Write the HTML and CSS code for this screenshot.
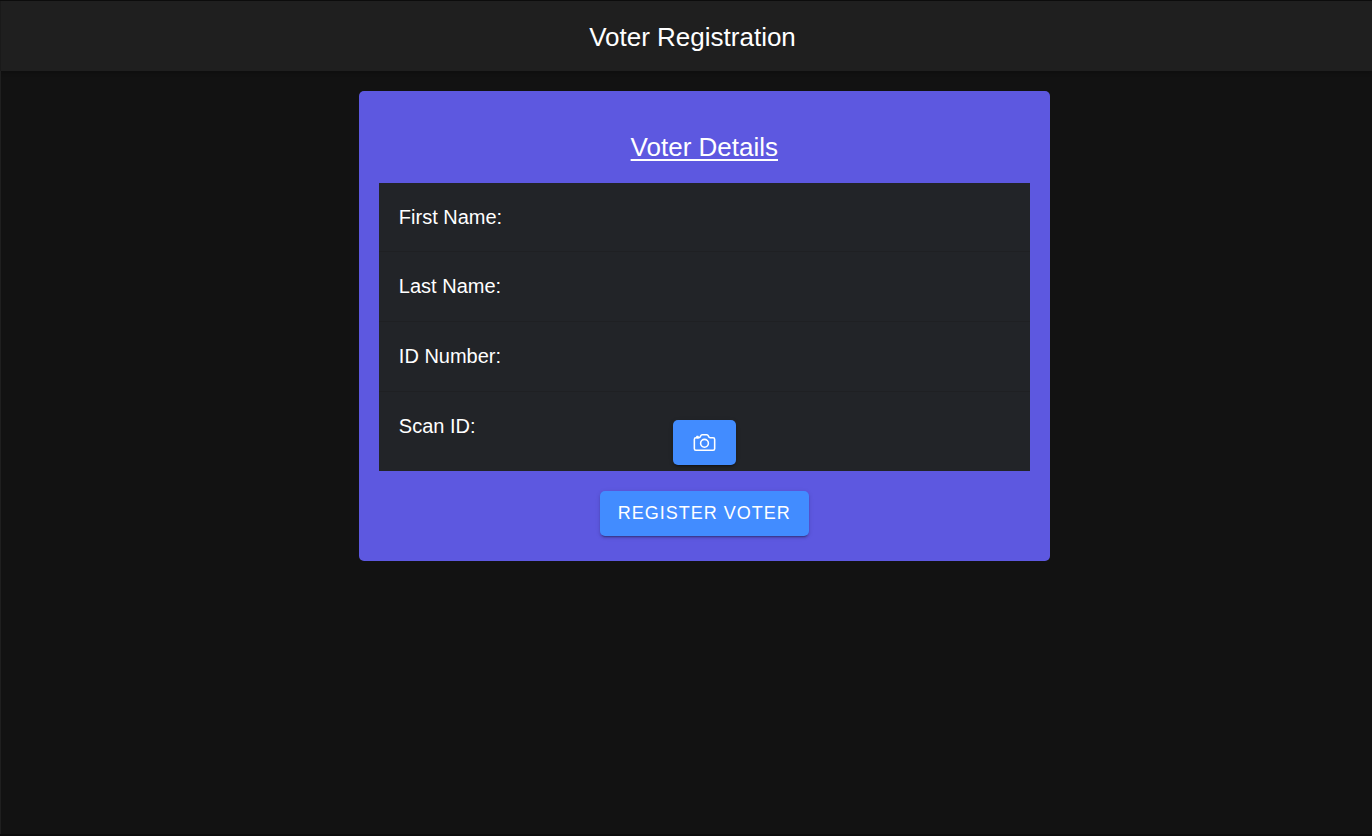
FILE: index.html
```html
<!DOCTYPE html>
<html lang="en">
<head>
<meta charset="utf-8">
<title>Voter Registration</title>
<link rel="stylesheet" href="styles.css">
</head>
<body>
<header class="toolbar"><h1 class="toolbar-title">Voter Registration</h1></header>
<main class="content">
  <form class="card">
    <h2 class="card-title">Voter Details</h2>
    <div class="list">
      <div class="item"><label for="first">First Name:</label><input id="first" type="text"></div>
      <div class="item"><label for="last">Last Name:</label><input id="last" type="text"></div>
      <div class="item"><label for="idnum">ID Number:</label><input id="idnum" type="text"></div>
      <div class="item item-scan">
        <label for="scan">Scan ID:</label>
        <button class="button scan-button" id="scan" type="button">
          <svg class="icon" viewBox="0 0 512 512" aria-hidden="true" fill="none" stroke="currentColor" stroke-width="32" stroke-linecap="round" stroke-linejoin="round">
            <path d="M350.54 148.68l-26.62-42.06C318.31 100.08 310.62 96 302 96h-92c-8.62 0-16.31 4.08-21.92 10.62l-26.62 42.06C155.85 155.23 148.62 160 140 160H80a32 32 0 00-32 32v192a32 32 0 0032 32h352a32 32 0 0032-32V192a32 32 0 00-32-32h-59c-8.65 0-16.85-4.77-22.46-11.32z"/>
            <circle cx="256" cy="272" r="80"/>
            <path d="M124 158v-22h-24v22"/>
          </svg>
        </button>
      </div>
    </div>
    <button class="button register-button" type="button">Register Voter</button>
  </form>
</main>
</body>
</html>
```

FILE: styles.css
```css
* { box-sizing: border-box; }
body {
  margin: 0;
  min-height: 100vh;
  display: flex;
  flex-direction: column;
  background: #121212;
  border: 1px solid #0c0c0c;
  border-width: 1px 0 2px;
  color: #fff;
  font-family: "Liberation Sans", Arial, sans-serif;
  font-size: 20px;
}
.toolbar {
  display: flex;
  align-items: center;
  justify-content: center;
  height: 70px;
  padding: 2px 0 0 12px;
  background: #1f1f1f;
  border-left: 1px solid #1a1a1a;
  box-shadow: 0 2px 4px rgba(0, 0, 0, .2);
}
.toolbar-title {
  margin: 0;
  font-size: 26px;
  line-height: 30px;
  font-weight: 400;
}
.content {
  flex: 1;
  padding-top: 20px;
  border-left: 1px solid #1f1f1f;
}
.card {
  display: flex;
  flex-direction: column;
  align-items: center;
  width: 50.4%;
  margin-left: 26.1%;
  padding: 40px 20px 25px;
  border-radius: 5px;
  background: #5d58e0;
}
.card-title {
  margin: 0 0 20px;
  font-size: 26px;
  line-height: 32px;
  font-weight: 400;
  text-decoration: underline;
  text-underline-offset: 3px;
}
.list {
  align-self: stretch;
  margin-bottom: 20px;
  background: #222428;
}
.item {
  display: grid;
  grid-template-columns: auto 1fr;
  align-items: center;
  column-gap: 20px;
  height: 70px;
  padding: 0 20px;
  border-bottom: 1px solid #1f2023;
}
.item:first-child {
  height: 69px;
}
.item input {
  width: 100%;
  height: 44px;
  border: 0;
  outline: 0;
  background: transparent;
  color: inherit;
  font: inherit;
}
.item-scan {
  grid-template-columns: 1fr auto 1fr;
  align-items: start;
  height: auto;
  padding-bottom: 6px;
  border-bottom: 0;
}
.item-scan label {
  padding-top: 23px;
}
.button {
  height: 45px;
  border: 0;
  border-radius: 5px;
  background: #428cff;
  color: #fff;
  font: 18px "Liberation Sans", Arial, sans-serif;
  letter-spacing: 1px;
  text-transform: uppercase;
  box-shadow: 0 3px 1px -2px rgba(0, 0, 0, .2), 0 2px 2px rgba(0, 0, 0, .14), 0 1px 5px rgba(0, 0, 0, .12);
}
.scan-button {
  display: flex;
  align-items: center;
  justify-content: center;
  width: 63px;
  margin-top: 28px;
  padding: 0;
}
.icon {
  width: 25px;
  height: 25px;
}
.register-button {
  padding: 0 18px;
}
```
